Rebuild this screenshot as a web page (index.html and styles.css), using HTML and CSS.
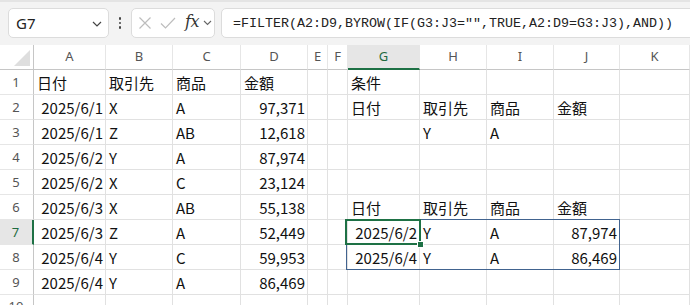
FILE: index.html
```html
<!DOCTYPE html>
<html lang="ja">
<head>
<meta charset="utf-8">
<title>Sheet</title>
<link rel="stylesheet" href="styles.css">
</head>
<body>
<div class="app">
  <div class="toolbar">
    <div class="namebox">
      <span class="name">G7</span>
      <svg class="chev" width="10" height="6" viewBox="0 0 10 6"><path d="M1 1l4 4 4-4" fill="none" stroke="#444" stroke-width="1.2"/></svg>
    </div>
    <div class="dots"><span></span><span></span><span></span></div>
    <div class="fxbox">
      <svg class="ico" width="14" height="14" viewBox="0 0 14 14"><path d="M1.5 1.5l11 11M12.5 1.5l-11 11" stroke="#bdbdbd" stroke-width="1.2" fill="none"/></svg>
      <svg class="ico" width="16" height="14" viewBox="0 0 16 14"><path d="M1 7.5l4.5 4.5L15 2" stroke="#bdbdbd" stroke-width="1.2" fill="none"/></svg>
      <span class="fx">fx</span>
      <svg class="chev2" width="9" height="6" viewBox="0 0 9 6"><path d="M1 1l3.5 3.5L8 1" fill="none" stroke="#666" stroke-width="1.1"/></svg>
    </div>
    <div class="formula">=FILTER(A2:D9,BYROW(IF(G3:J3="",TRUE,A2:D9=G3:J3),AND))</div>
  </div>

  <div class="sheet">
    <div class="corner"><span class="tri"></span></div>
    <div class="ch">A</div><div class="ch">B</div><div class="ch">C</div><div class="ch">D</div><div class="ch">E</div><div class="ch">F</div><div class="ch sel">G</div><div class="ch">H</div><div class="ch">I</div><div class="ch">J</div><div class="ch">K</div>

    <div class="rh">1</div>
    <div class="c">日付</div><div class="c">取引先</div><div class="c">商品</div><div class="c">金額</div><div class="c"></div><div class="c"></div><div class="c">条件</div><div class="c"></div><div class="c"></div><div class="c"></div><div class="c"></div>

    <div class="rh">2</div>
    <div class="c r">2025/6/1</div><div class="c">X</div><div class="c">A</div><div class="c r">97,371</div><div class="c"></div><div class="c"></div><div class="c">日付</div><div class="c">取引先</div><div class="c">商品</div><div class="c">金額</div><div class="c"></div>

    <div class="rh">3</div>
    <div class="c r">2025/6/1</div><div class="c">Z</div><div class="c">AB</div><div class="c r">12,618</div><div class="c"></div><div class="c"></div><div class="c"></div><div class="c">Y</div><div class="c">A</div><div class="c"></div><div class="c"></div>

    <div class="rh">4</div>
    <div class="c r">2025/6/2</div><div class="c">Y</div><div class="c">A</div><div class="c r">87,974</div><div class="c"></div><div class="c"></div><div class="c"></div><div class="c"></div><div class="c"></div><div class="c"></div><div class="c"></div>

    <div class="rh">5</div>
    <div class="c r">2025/6/2</div><div class="c">X</div><div class="c">C</div><div class="c r">23,124</div><div class="c"></div><div class="c"></div><div class="c"></div><div class="c"></div><div class="c"></div><div class="c"></div><div class="c"></div>

    <div class="rh">6</div>
    <div class="c r">2025/6/3</div><div class="c">X</div><div class="c">AB</div><div class="c r">55,138</div><div class="c"></div><div class="c"></div><div class="c">日付</div><div class="c">取引先</div><div class="c">商品</div><div class="c">金額</div><div class="c"></div>

    <div class="rh sel">7</div>
    <div class="c r">2025/6/3</div><div class="c">Z</div><div class="c">A</div><div class="c r">52,449</div><div class="c"></div><div class="c"></div><div class="c r">2025/6/2</div><div class="c">Y</div><div class="c">A</div><div class="c r">87,974</div><div class="c"></div>

    <div class="rh">8</div>
    <div class="c r">2025/6/4</div><div class="c">Y</div><div class="c">C</div><div class="c r">59,953</div><div class="c"></div><div class="c"></div><div class="c r">2025/6/4</div><div class="c">Y</div><div class="c">A</div><div class="c r">86,469</div><div class="c"></div>

    <div class="rh">9</div>
    <div class="c r">2025/6/4</div><div class="c">Y</div><div class="c">A</div><div class="c r">86,469</div><div class="c"></div><div class="c"></div><div class="c"></div><div class="c"></div><div class="c"></div><div class="c"></div><div class="c"></div>

    <div class="rh last">10</div>
    <div class="c"></div><div class="c"></div><div class="c"></div><div class="c"></div><div class="c"></div><div class="c"></div><div class="c"></div><div class="c"></div><div class="c"></div><div class="c"></div><div class="c"></div>

    <div class="spill"></div>
    <div class="active"><span class="handle"></span></div>
  </div>
</div>
</body>
</html>
```

FILE: styles.css
```css
* { box-sizing: border-box; }
html, body { margin: 0; padding: 0; background: #fff; }
.app { width: 690px; height: 305px; overflow: hidden; font-family: "Noto Sans CJK JP", "Noto Sans", sans-serif; }

.toolbar {
  height: 45px;
  background: #f3f3f3;
  border-top: 2px solid #e4e4e4;
  display: flex;
  align-items: flex-start;
  padding: 6px 0 0 8px;
  overflow: hidden;
}
.namebox, .fxbox, .formula {
  flex: none;
  height: 30px;
  background: #fff;
  border: 1px solid #dcdcdc;
  border-radius: 5px;
  display: flex;
  align-items: center;
}
.namebox { width: 101px; padding: 0 6px 0 7px; justify-content: space-between; }
.name { font-family: "Noto Sans", sans-serif; font-size: 15px; color: #222; }
.chev { margin-top: 1px; }
.dots { flex: none; width: 22px; height: 30px; display: flex; flex-direction: column; align-items: center; justify-content: center; gap: 2px; }
.dots span { width: 2.5px; height: 2.5px; background: #444; border-radius: 50%; }
.fxbox { width: 84px; padding: 0 0 0 6px; }
.fxbox .ico:first-child { margin-right: 8px; }
.fxbox .ico:nth-child(2) { margin-right: 9px; }
.fx { font-family: "DejaVu Serif", "Liberation Serif", serif; font-style: italic; font-size: 16px; color: #333; letter-spacing: -0.5px; margin-top: -3px; }
.chev2 { margin-left: 4px; }
.formula {
  margin-left: 6px;
  width: 520px;
  padding-left: 11px;
  font-family: "Liberation Mono", monospace;
  font-size: 13.33px;
  color: #222;
  white-space: pre;
}

.sheet {
  position: relative;
  display: grid;
  grid-template-columns: 34px 72px 67px 68px 67px 20px 20px 72px 67px 67px 66px 1fr;
  grid-template-rows: 25px repeat(10, 25px);
  font-size: 15px;
  color: #111;
}
.corner { border-right: 1px solid #c6c6c6; border-bottom: 1px solid #c6c6c6; position: relative; background: #fff; }
.tri {
  position: absolute; right: 3px; bottom: 3px;
  width: 0; height: 0;
  border-left: 16px solid transparent;
  border-bottom: 16px solid #dedede;
}
.ch {
  border-right: 1px solid #e6e6e6;
  border-bottom: 1px solid #c6c6c6;
  display: flex; align-items: center; justify-content: center;
  font-family: "Noto Sans", sans-serif;
  font-size: 13px;
  color: #555;
  padding-bottom: 2px;
}
.ch.sel { background: #e6e6e6; color: #1e6b40; border-bottom: 2px solid #1e7145; padding-bottom: 1px; }
.rh {
  border-right: 1px solid #c6c6c6;
  border-bottom: 1px solid #e6e6e6;
  display: flex; align-items: center; justify-content: center;
  font-family: "Noto Sans", sans-serif;
  font-size: 13px;
  color: #555;
  padding-right: 1px;
}
.rh.last { align-items: flex-start; padding-top: 2px; }
.rh.sel { background: #e6e6e6; color: #1e6b40; border-right: 2px solid #1e7145; }
.c {
  border-right: 1px solid #e1e1e1;
  border-bottom: 1px solid #e1e1e1;
  display: flex; align-items: center;
  padding: 1px 2px 0 3px;
  white-space: nowrap;
  overflow: visible;
}
.c.r { justify-content: flex-end; padding-right: 2px; }

.spill {
  position: absolute;
  grid-column: 8 / 12;
  grid-row: 8 / 10;
  left: -2px; top: -1px; right: 0; bottom: 0;
  border: 1px solid #41638f;
  pointer-events: none;
}
.active {
  position: absolute;
  grid-column: 8 / 9;
  grid-row: 8 / 9;
  left: -3px; top: -1px; right: -1px; bottom: 0;
  border: 2px solid #1e7145;
  pointer-events: none;
}
.handle {
  position: absolute; right: -5px; bottom: -5px;
  width: 7px; height: 7px;
  background: #1e7145;
  border: 1px solid #fff;
}
```
